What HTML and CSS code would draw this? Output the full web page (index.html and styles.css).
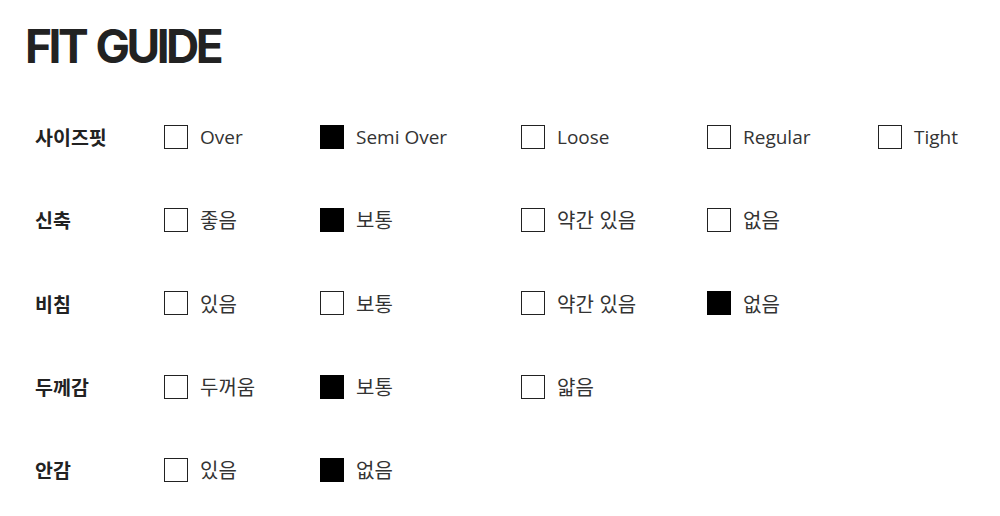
FILE: index.html
```html
<!DOCTYPE html>
<html lang="ko">
<head>
<meta charset="utf-8">
<title>FIT GUIDE</title>
<link rel="stylesheet" href="styles.css">
</head>
<body>
<div class="page">
  <h1 class="title">FIT GUIDE</h1>
  <div class="guide">
    <div class="row">
      <div class="label">사이즈핏</div>
      <div class="opt"><span class="box"></span><span class="txt">Over</span></div>
      <div class="opt"><span class="box on"></span><span class="txt">Semi Over</span></div>
      <div class="opt"><span class="box"></span><span class="txt">Loose</span></div>
      <div class="opt"><span class="box"></span><span class="txt">Regular</span></div>
      <div class="opt"><span class="box"></span><span class="txt">Tight</span></div>
    </div>
    <div class="row">
      <div class="label">신축</div>
      <div class="opt"><span class="box"></span><span class="txt ko">좋음</span></div>
      <div class="opt"><span class="box on"></span><span class="txt ko">보통</span></div>
      <div class="opt"><span class="box"></span><span class="txt ko">약간 있음</span></div>
      <div class="opt"><span class="box"></span><span class="txt ko">없음</span></div>
    </div>
    <div class="row">
      <div class="label">비침</div>
      <div class="opt"><span class="box"></span><span class="txt ko">있음</span></div>
      <div class="opt"><span class="box"></span><span class="txt ko">보통</span></div>
      <div class="opt"><span class="box"></span><span class="txt ko">약간 있음</span></div>
      <div class="opt"><span class="box on"></span><span class="txt ko">없음</span></div>
    </div>
    <div class="row">
      <div class="label">두께감</div>
      <div class="opt"><span class="box"></span><span class="txt ko">두꺼움</span></div>
      <div class="opt"><span class="box on"></span><span class="txt ko">보통</span></div>
      <div class="opt"><span class="box"></span><span class="txt ko">얇음</span></div>
    </div>
    <div class="row">
      <div class="label">안감</div>
      <div class="opt"><span class="box"></span><span class="txt ko">있음</span></div>
      <div class="opt"><span class="box on"></span><span class="txt ko">없음</span></div>
    </div>
  </div>
</div>
</body>
</html>
```
FILE: styles.css
```css
html, body {
  margin: 0;
  padding: 0;
  background: #fff;
}
.page {
  padding: 20px 0 0 25px;
  font-family: "Open Sans", "Noto Sans CJK KR", sans-serif;
  color: #333;
}
.title {
  margin: 0;
  font-family: Inter, "Liberation Sans", sans-serif;
  font-weight: 700;
  font-size: 46px;
  line-height: 52px;
  letter-spacing: -3.5px;
  word-spacing: 3px;
  color: #222;
}
.guide {
  padding: 23px 0 0 10px;
}
.row {
  display: grid;
  grid-template-columns: 129px 156px 201px 186px 171px auto;
  align-items: center;
  height: 83.3px;
}
.label {
  font-family: "Noto Sans CJK KR", sans-serif;
  font-weight: 700;
  font-size: 19.5px;
  color: #222;
}
.opt {
  display: flex;
  align-items: center;
  gap: 12px;
}
.box {
  width: 22px;
  height: 22px;
  border: 1px solid #222;
  background: #fff;
}
.box.on {
  background: #000;
  border-color: #000;
}
.txt {
  font-size: 19px;
  color: #333;
}
.txt.ko {
  font-family: "Noto Sans CJK KR", sans-serif;
  font-size: 20px;
}
```
